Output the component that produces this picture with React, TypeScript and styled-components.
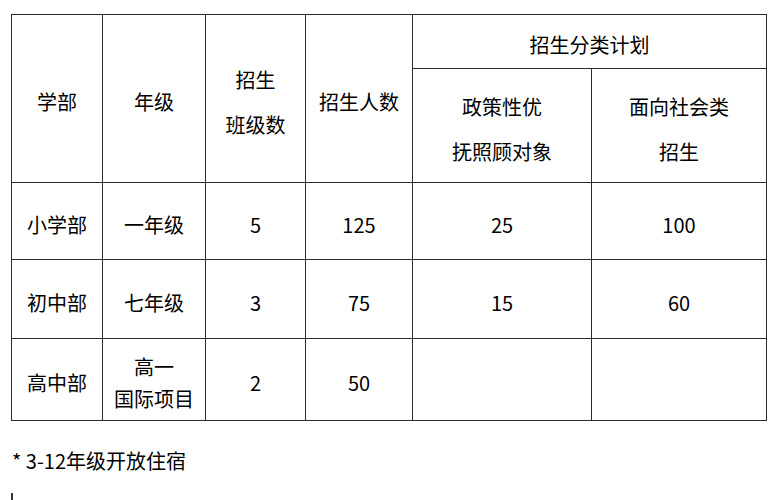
import React from "react";
import styled, { createGlobalStyle } from "styled-components";

const Global = createGlobalStyle`
  html, body { margin: 0; padding: 0; background: #fff; }
  body { font-family: "Noto Sans CJK SC", "Noto Sans", sans-serif; color: #000; }
`;

const Page = styled.div`
  padding: 14px 0 0 11px;
  width: 780px;
  box-sizing: border-box;
`;

const Table = styled.table`
  border-collapse: collapse;
  table-layout: fixed;
  width: 755px;
  font-size: 20px;
`;

const Cell = styled.td<{ $lh?: number }>`
  border: 1.5px solid #2a2a2a;
  text-align: center;
  vertical-align: middle;
  padding: 7px 0 0 0;
  line-height: ${(p) => (p.$lh ? `${p.$lh}px` : "1.3")};
  font-weight: 400;
`;

const Row = styled.tr<{ $h: number }>`
  height: ${(p) => p.$h}px;
`;

const Note = styled.p`
  margin: 26px 0 0 1px;
  font-size: 20px;
  line-height: 28px;
  font-weight: 400;
`;

const Tick = styled.div`
  margin-top: 18px;
  width: 1.5px;
  height: 10px;
  background: #333;
`;

const cols = [91, 103, 100, 107, 179, 175];

const rows: { d: React.ReactNode; g: React.ReactNode; c: string; n: string; p: string; s: string; h: number }[] = [
  { d: "小学部", g: "一年级", c: "5", n: "125", p: "25", s: "100", h: 77 },
  { d: "初中部", g: "七年级", c: "3", n: "75", p: "15", s: "60", h: 79 },
  {
    d: "高中部",
    g: (
      <>
        高一
        <br />
        国际项目
      </>
    ),
    c: "2",
    n: "50",
    p: "",
    s: "",
    h: 82,
  },
];

export default function App() {
  return (
    <>
      <Global />
      <Page>
        <Table>
          <colgroup>
            {cols.map((w, i) => (
              <col key={i} style={{ width: w }} />
            ))}
          </colgroup>
          <tbody>
            <Row $h={54}>
              <Cell as="th" rowSpan={2}>学部</Cell>
              <Cell as="th" rowSpan={2}>年级</Cell>
              <Cell as="th" rowSpan={2} $lh={45}>
                招生
                <br />
                班级数
              </Cell>
              <Cell as="th" rowSpan={2}>招生人数</Cell>
              <Cell as="th" colSpan={2}>招生分类计划</Cell>
            </Row>
            <Row $h={114}>
              <Cell as="th" $lh={45}>
                政策性优
                <br />
                抚照顾对象
              </Cell>
              <Cell as="th" $lh={45}>
                面向社会类
                <br />
                招生
              </Cell>
            </Row>
            {rows.map((r, i) => (
              <Row key={i} $h={r.h}>
                <Cell>{r.d}</Cell>
                <Cell $lh={32}>{r.g}</Cell>
                <Cell>{r.c}</Cell>
                <Cell>{r.n}</Cell>
                <Cell>{r.p}</Cell>
                <Cell>{r.s}</Cell>
              </Row>
            ))}
          </tbody>
        </Table>
        <Note>* 3-12年级开放住宿</Note>
        <Tick />
      </Page>
    </>
  );
}
